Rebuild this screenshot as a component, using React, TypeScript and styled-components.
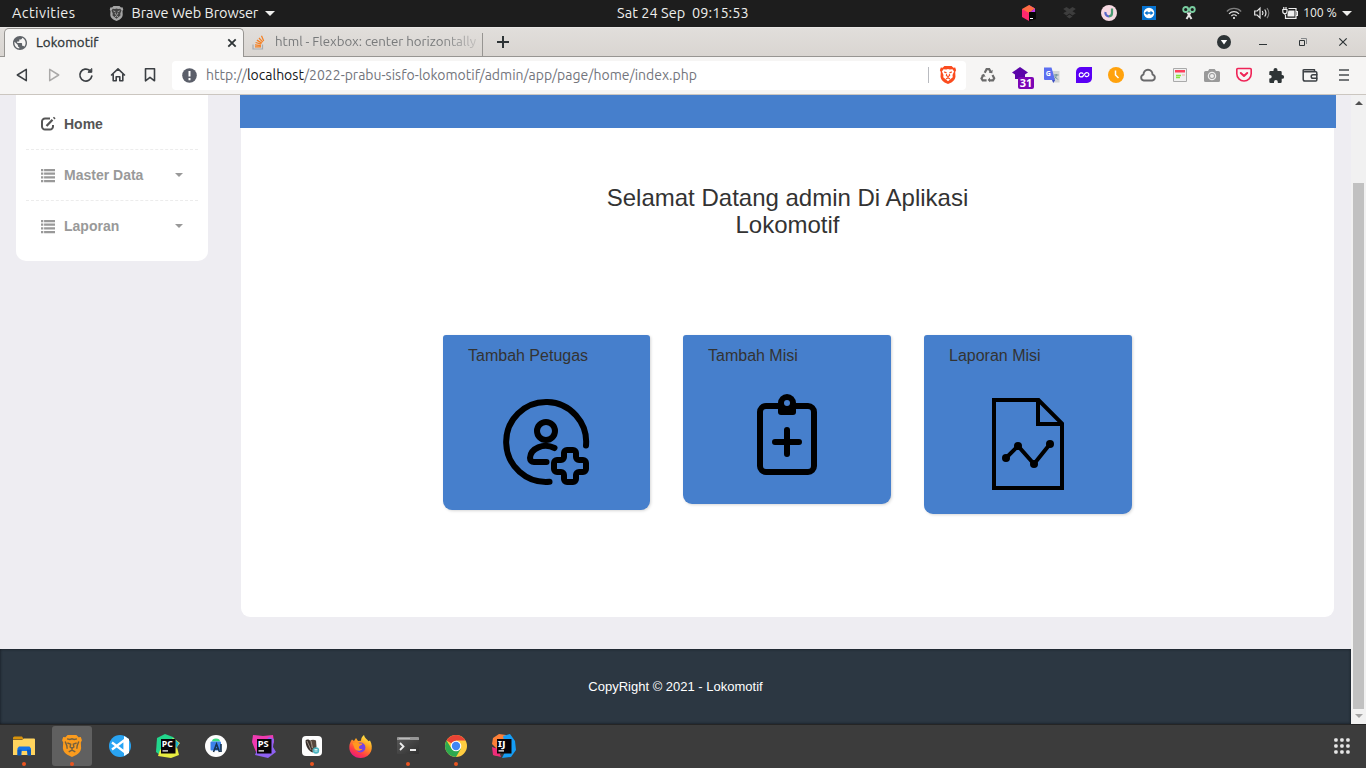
import React from "react";
import styled, { createGlobalStyle } from "styled-components";

const GlobalStyle = createGlobalStyle`
  * { box-sizing: border-box; }
  html, body { margin: 0; padding: 0; }
  body { width: 1366px; height: 768px; overflow: hidden; background: #eeedf2; }
  svg { display: block; flex: none; overflow: visible; }
`;

const uiFont = `Ubuntu, "Noto Sans", "Open Sans", sans-serif`;
const pageFont = `"Liberation Sans", Arial, sans-serif`;

const Desktop = styled.div`
  width: 1366px;
  height: 768px;
  display: flex;
  flex-direction: column;
  overflow: hidden;
`;

const Label = styled.span<{ $size?: number; $spacing?: number; $color?: string; $bolder?: boolean }>`
  font-family: ${uiFont};
  font-size: ${(p) => p.$size ?? 14}px;
  letter-spacing: ${(p) => p.$spacing ?? 0}px;
  color: ${(p) => p.$color ?? "inherit"};
  ${(p) => p.$bolder && "-webkit-text-stroke: 0.3px currentColor;"}
  white-space: pre;
  line-height: 20px;
`;

/* ---------- System bar ---------- */

const SystemBar = styled.header`
  flex: none;
  height: 27px;
  padding-bottom: 1px;
  background: #1d1d1d;
  color: #eeeeec;
  display: grid;
  grid-template-columns: 617px 392px 1fr;
  align-items: center;
`;

const SystemLeft = styled.div`
  display: flex;
  align-items: center;
  padding-left: 12px;
`;

const AppMenu = styled.div`
  display: flex;
  align-items: center;
  margin-left: 34px;
  gap: 7px;
`;

const Tray = styled.div`
  display: flex;
  align-items: center;
`;

const TrayCell = styled.div<{ $w?: number }>`
  width: ${(p) => p.$w ?? 40}px;
  display: flex;
  flex: none;
  justify-content: center;
`;

const StatusMenu = styled.div`
  display: flex;
  align-items: center;
  padding-left: 17px;
  gap: 12px;
`;

const BatteryStatus = styled.div`
  display: flex;
  align-items: center;
  gap: 5px;
`;

const Caret = styled.i<{ $w?: number; $color?: string; $up?: boolean }>`
  display: block;
  flex: none;
  width: 0;
  height: 0;
  border: ${(p) => p.$w ?? 5}px solid transparent;
  border-top: ${(p) => (p.$up ? "0" : `${p.$w ?? 5}px solid ${p.$color ?? "#eeeeec"}`)};
  border-bottom: ${(p) => (p.$up ? `${p.$w ?? 5}px solid ${p.$color ?? "#eeeeec"}` : "0")};
`;

/* ---------- Browser chrome ---------- */

const TabStrip = styled.div`
  flex: none;
  height: 30px;
  display: flex;
  background: linear-gradient(#e1dedb, #d9d5d1);
  border-top: 1px solid #e9e7e5;
  box-shadow: inset 0 -1px #979592;
`;

const ActiveTab = styled.div`
  width: 240px;
  height: 29px;
  margin-left: 4px;
  display: flex;
  align-items: center;
  padding: 0 7px 1px 8px;
  background: #f6f5f4;
  border: 1px solid #979592;
  border-bottom: 0;
  border-radius: 5px 5px 0 0;
`;

const IdleTab = styled.div`
  width: 239px;
  height: 23px;
  margin-top: 5px;
  display: flex;
  align-items: center;
  padding: 0 0 5px 8px;
  border-right: 1px solid #979592;
`;

const TabTitle = styled.div<{ $fade?: boolean }>`
  flex: 1;
  margin-left: 9px;
  display: flex;
  ${(p) => p.$fade && `margin-left: 10px; mask-image: linear-gradient(90deg, #000 165px, rgba(0, 0, 0, 0.25) 202px);`}
`;

const NewTab = styled.div`
  width: 40px;
  display: flex;
  align-items: center;
  justify-content: center;
  padding-bottom: 1px;
`;

const WindowControls = styled.div`
  margin-left: auto;
  display: flex;
  align-items: center;
  padding: 0 3px 1px 0;
`;

const Toolbar = styled.div`
  flex: none;
  height: 38px;
  padding: 0 6px;
  display: flex;
  align-items: center;
  background: #f6f5f4;
  border-bottom: 1px solid #cbc6c0;
`;

const ToolButton = styled.div<{ $w?: number }>`
  width: ${(p) => p.$w ?? 32}px;
  height: 29px;
  padding-bottom: 1px;
  display: flex;
  flex: none;
  align-items: center;
  justify-content: center;
  position: relative;
`;

const AddressBar = styled.div`
  width: 794px;
  height: 29px;
  margin: 0 6px;
  display: flex;
  align-items: center;
  padding: 0 0 1px 10px;
  background: #fff;
  border-radius: 4px;
  color: #73757c;
`;

const Url = styled.div`
  margin-left: 9px;
  padding-bottom: 1px;
  flex: 1;
  display: flex;
`;

const ShieldSlot = styled.div`
  width: 38px;
  height: 16px;
  display: flex;
  align-items: center;
  justify-content: center;
  border-left: 1px solid #b9bbc0;
`;

const Badge = styled.span`
  position: absolute;
  left: 14px;
  top: 16px;
  width: 16px;
  height: 12px;
  border-radius: 2px;
  background: #7c06b5;
  color: #fff;
  font: 700 11px/12px "Noto Sans", sans-serif;
  text-align: center;
`;

/* ---------- Web page ---------- */

const Viewport = styled.div`
  flex: 1;
  min-height: 0;
  display: flex;
  font-family: ${pageFont};
`;

const Page = styled.div`
  width: 1351px;
  display: flex;
  flex-direction: column;
  background: #eeedf2;
`;

const Columns = styled.div`
  height: 554px;
  display: flex;
  align-items: flex-start;
`;

const Sidebar = styled.nav`
  width: 192px;
  height: 166px;
  margin-left: 16px;
  padding: 4px 10px 0;
  background: #fff;
  border-radius: 0 0 10px 10px;
`;

const NavItem = styled.div<{ $active?: boolean }>`
  height: 51px;
  display: flex;
  align-items: center;
  padding: 0 15px;
  font-size: 14px;
  font-weight: 700;
  color: ${(p) => (p.$active ? "#555" : "#999")};
  border-bottom: 1px dashed #ececec;
  &:last-child { border-bottom-color: transparent; }
  span { margin-left: 9px; flex: 1; }
`;

const Main = styled.main`
  width: 1096px;
  margin-left: 32px;
`;

const Banner = styled.div`
  height: 33px;
  background: #467fcc;
`;

const Panel = styled.section`
  height: 489px;
  margin: 0 2px 0 1px;
  background: #fff;
  border-radius: 0 0 9px 9px;
  display: flex;
  flex-direction: column;
  align-items: center;
`;

const Welcome = styled.h1`
  width: 400px;
  margin: 56px 0 0;
  font-weight: 400;
  font-size: 24px;
  line-height: 27px;
  text-align: center;
  color: #333;
`;

const CardRow = styled.div`
  display: flex;
  align-items: flex-start;
  gap: 33px;
  margin-top: 97px;
`;

const Card = styled.article<{ $h: number; $w?: number }>`
  width: ${(p) => p.$w ?? 208}px;
  height: ${(p) => p.$h}px;
  background: #467fcc;
  border-radius: 3px 3px 9px 9px;
  box-shadow: 1px 1px 3px rgba(0, 0, 0, 0.16);
  display: flex;
  flex-direction: column;
`;

const CardTitle = styled.h2`
  margin: 11px 0 0 25px;
  font-size: 16px;
  font-weight: 400;
  line-height: 20px;
  color: #333;
`;

const CardIcon = styled.div<{ $top: number; $left: number }>`
  margin: ${(p) => p.$top}px 0 0 ${(p) => p.$left}px;
`;

const Footer = styled.footer`
  height: 75px;
  display: flex;
  align-items: center;
  justify-content: center;
  background: #2c3742;
  box-shadow: inset 0 0 3px #10161d;
  color: #fff;
  font-size: 13px;
`;

const Scrollbar = styled.div`
  width: 15px;
  display: flex;
  flex-direction: column;
  align-items: center;
  background: #f1f1f1;
  padding: 6px 0 5px;
`;

const Thumb = styled.div`
  width: 11px;
  height: 526px;
  margin-top: 78px;
  margin-bottom: 5px;
  background: #c1c1c1;
`;

/* ---------- Dock ---------- */

const DockBar = styled.footer`
  flex: none;
  height: 44px;
  display: flex;
  align-items: center;
  background: #3c3c3c;
  border-top: 1px solid #252525;
`;

const DockItem = styled.div<{ $active?: boolean; $running?: boolean }>`
  position: relative;
  width: 40px;
  height: 40px;
  margin: -1px 4px 0;
  display: flex;
  align-items: center;
  justify-content: center;
  border-radius: 3px;
  background: ${(p) => (p.$active ? "#606060" : "transparent")};
  &::after {
    content: "";
    display: ${(p) => (p.$running ? "block" : "none")};
    position: absolute;
    left: 18px;
    bottom: 0;
    width: 4px;
    height: 4px;
    border-radius: 2px;
    background: #e95420;
  }
`;

const AppsButton = styled.div`
  margin: -1px 0 0 auto;
  width: 48px;
  display: flex;
  justify-content: center;
`;

/* ---------- Drawings ---------- */

const Lion = ({ size = 16, fill = "#fb4c1f", face = "#fff", line = fill }) => (
  <svg width={size} height={size} viewBox="0 0 18 20">
    <path d="M5 0h8l2 2 2-.2 1 3-1 2 .3 5.2c-.4 3-2 4.500-4.500 6.200L9 20l-3.800-1.800C2.700 16.500 1.100 15 .7 12L1 6.800 0 4.800l1-3L3 2z" fill={fill} />
    <path d="M4 3.500 7 4l2-.8 2 .8 3-.5 1.700 2.500-1.700 4 .3 2.500L9 17l-5.300-4.500.3-2.500-1.700-4z" fill={face} />
    <path d="M4.800 6.500l2.700 1.200M13.200 6.500l-2.700 1.200M7.500 9l-.3 1.500L9 11.800l1.800-1.300-.3-1.500M6.800 14.500 9 13l2.200 1.500" fill="none" stroke={line} strokeWidth="1.300" />
  </svg>
);

const DockLion = () => (
  <svg width="20" height="22" viewBox="0 0 18 20">
    <path d="M5 0h8l2 2 2-.2 1 3-1 2 .3 5.200c-.4 3-2 4.500-4.500 6.200L9 20l-3.800-1.800C2.700 16.500 1.100 15 .7 12L1 6.800 0 4.800l1-3L3 2z" fill="#fb9b1d" />
    <path d="M4.500 3.500 7 4l2-.6 2 .6 2.500-.5M2.800 6l1.500 3.800.3 2.700M15.200 6l-1.500 3.800-.3 2.700M4.800 7.300l3 1-.5 2.500 1.700 1.400 1.700-1.400-.5-2.500 3-1M9 12.200v1.500M6 15.300l3-1.600 3 1.600" fill="none" stroke="#75613f" strokeWidth="1.300" />
  </svg>
);

const Globe = () => (
  <svg width="14" height="14" viewBox="2 2 20 20" fill="#5f6368">
    <path d="M12 2C6.480 2 2 6.480 2 12s4.480 10 10 10 10-4.480 10-10S17.520 2 12 2zm-1 17.930c-3.950-.49-7-3.850-7-7.930 0-.62.08-1.210.21-1.790L9 15v1c0 1.100.9 2 2 2v1.930zm6.900-2.540c-.26-.81-1-1.390-1.900-1.390h-1v-3c0-.55-.45-1-1-1H8v-2h2c.55 0 1-.45 1-1V7h2c1.100 0 2-.9 2-2v-.41c2.930 1.190 5 4.060 5 7.410 0 2.080-.8 3.970-2.100 5.390z" />
  </svg>
);

const StackOverflow = () => (
  <svg width="13" height="15" viewBox="0 0 13 15" fill="none">
    <path d="M1 9.500v4.500h9.500V9.500" stroke="#a7abb0" strokeWidth="1.200" />
    <path d="M3 11.900h6M3 9.800l5.900.8M3.600 7.500l5.600 1.700M4.900 5.100l4.900 3M7 3l3.800 4.200M9.500.8l2.200 5.300" stroke="#f48024" strokeWidth="1.250" />
  </svg>
);

const Cross = ({ size = 8, color = "#2e3436", w = 1.8 }) => (
  <svg width={size} height={size} viewBox="0 0 8 8" stroke={color} strokeWidth={w} fill="none">
    <path d="M.3.3l7.400 7.400M7.700.3.3 7.700" />
  </svg>
);

const Stroke = ({ children, color = "#3b3f43", w = 1.5, size = 16 }: { children: React.ReactNode; color?: string; w?: number; size?: number }) => (
  <svg width={size} height={size} viewBox="0 0 16 16" fill="none" stroke={color} strokeWidth={w} strokeLinecap="round" strokeLinejoin="round">
    {children}
  </svg>
);

const Recycle = () => (
  <svg width="16" height="16" viewBox="0 0 16 16" fill="none" stroke="#6b6b6b" strokeWidth="2.200">
    <path d="M4.700 5.800 6.600 2.200h2.600l1.600 2.900M12.500 8l1.700 3.200-1.200 2.200H9.500M6.600 13.400H2.700L1.500 11.500l1.700-3.200" />
    <path d="M8.700 5.800l3.600.5.400-3.600zM10 10.500v4.800L7.600 13zM1 8.200l3-1.500 1.600 3.200z" fill="#6b6b6b" stroke="none" />
  </svg>
);

const Translate = () => (
  <svg width="16" height="16" viewBox="0 0 16 16">
    <path d="M8 4h7.500v11.500H9z" fill="#d4d6d6" />
    <path d="M0 .5h7.500l3.600 12.500H1a1 1 0 0 1-1-1z" fill="#5c6ff0" />
    <path d="M8 13h3.200L9.200 16z" fill="#3d4fc4" />
    <text x="1.800" y="9" fontSize="7" fontWeight="700" fill="#fff" fontFamily="Noto Sans">G</text>
    <path d="M10 8h4.500M12.200 7v1c0 2-1 3.300-2 4M10.800 9.500l3 3" stroke="#6a8f99" fill="none" />
  </svg>
);

const DiagonalLoop = () => (
  <svg width="16" height="16" viewBox="0 0 16 16">
    <path d="M5 0h11v11a5 5 0 0 1-5 5H0V5a5 5 0 0 1 5-5z" fill="#5a00f5" />
    <path d="M7.200 6.800C5.800 5 3.200 5.800 3.200 7.900s2.500 2.800 3.900 1.100L9 6.600c1.400-1.700 3.900-1 3.900 1s-2.600 2.800-4 1.100" fill="none" stroke="#fff" strokeWidth="1.200" />
  </svg>
);

const Camera = () => (
  <svg width="16" height="14" viewBox="0 0 16 14">
    <path d="M1.500 3H4l1.300-2h5.400L12 3h2.500A1.500 1.500 0 0 1 16 4.500v8a1.500 1.500 0 0 1-1.500 1.500h-13A1.500 1.500 0 0 1 0 12.500v-8A1.500 1.500 0 0 1 1.500 3z" fill="#999" />
    <circle cx="8" cy="8" r="3.600" fill="#999" stroke="#eee" strokeWidth="1.300" />
    <circle cx="8" cy="8" r="2" fill="#eee" />
  </svg>
);

const Puzzle = () => (
  <svg width="15" height="15" viewBox="0 0 15 15" fill="#2e3436">
    <path d="M1.500 3h3V2a2 2 0 0 1 4 0v1h3A1.200 1.200 0 0 1 12.700 4.200V7h.5a1.900 1.900 0 0 1 0 3.800h-.5v2.900a1.200 1.200 0 0 1-1.200 1.200H8.800V14a1.900 1.900 0 0 0-3.800 0v.9H1.500A1.200 1.200 0 0 1 .3 13.700V10.500H1a1.700 1.700 0 0 0 0-3.400H.3V4.200A1.200 1.200 0 0 1 1.500 3z" />
  </svg>
);

const EditIcon = () => (
  <svg width="14" height="14" viewBox="0 0 14 14" fill="none" stroke="#555" strokeWidth="2">
    <path d="M9 1.500H4A3 3 0 0 0 1 4.500v5a3 3 0 0 0 3 3h5a3 3 0 0 0 3-3V8" />
    <path d="M5.500 9l6-6.200M12.700 1.600l1.100-1.100" strokeWidth="2.300" />
  </svg>
);

const ListIcon = () => (
  <svg width="14" height="13" viewBox="0 0 14 13" stroke="#999" strokeWidth="2.250">
    {[1, 4.7, 8.3, 12].map((y) => (
      <path key={y} d={`M0 ${y}h2.300M3.100 ${y}h10.900`} />
    ))}
  </svg>
);

const PersonAdd = () => (
  <svg width="86" height="86" viewBox="0 0 86 86" fill="none" stroke="#000" strokeWidth="6" strokeLinecap="round">
    <path d="M83 46.500A40 40 0 1 0 46.500 82.800" />
    <circle cx="43" cy="32" r="9" />
    <path d="M51.500 49C40.500 43.500 27.500 49.500 27 59c0 2.500 1.500 4 4 4h12.500" />
    <path d="M61 58v-4a3 3 0 0 1 3-3h6a3 3 0 0 1 3 3v4a3 3 0 0 0 3 3h4a3 3 0 0 1 3 3v6a3 3 0 0 1-3 3h-4a3 3 0 0 0-3 3v4a3 3 0 0 1-3 3h-6a3 3 0 0 1-3-3v-4a3 3 0 0 0-3-3h-4a3 3 0 0 1-3-3v-6a3 3 0 0 1 3-3h4a3 3 0 0 0 3-3z" />
  </svg>
);

const ClipboardAdd = () => (
  <svg width="60" height="81" viewBox="0 0 60 81" fill="none" stroke="#000" strokeWidth="6" strokeLinecap="round">
    <rect x="3" y="12" width="54" height="66" rx="6" />
    <path d="M30 36v24M18 48h24" />
    <path d="M30 0a9 9 0 0 1 9 9v9a3 3 0 0 1-3 3H24a3 3 0 0 1-3-3V9a9 9 0 0 1 9-9z" fill="#000" stroke="none" />
    <circle cx="30" cy="9" r="3" fill="#467fcc" stroke="none" />
  </svg>
);

const ReportChart = () => (
  <svg width="72" height="92" viewBox="0 0 72 92" fill="none" stroke="#000" strokeWidth="4">
    <path d="M2 2h44.500L70 25.500V90H2z" />
    <path d="M46 2v24h24" />
    <path d="M14 60l12-12 16 18 16-20" />
    <g fill="#000" stroke="none">
      <circle cx="14" cy="60" r="4" />
      <circle cx="26" cy="48" r="4" />
      <circle cx="42" cy="66" r="4" />
      <circle cx="58" cy="46" r="4" />
    </g>
  </svg>
);

type JbProps = { text: string; shapes: [string, string][] };
const JetBrains = ({ text, shapes }: JbProps) => (
  <svg width="24" height="24" viewBox="0 0 24 24">
    {shapes.map(([d, fill], i) => (
      <path key={i} d={d} fill={fill} />
    ))}
    <rect x="5" y="5" width="14.500" height="14.500" fill="#080408" />
    <text x="5.800" y="12.600" fontFamily="Noto Sans" fontWeight="700" fontSize="8.500" fill="#fff" textLength={text === "IJ" ? 8 : 11} lengthAdjust="spacingAndGlyphs">{text}</text>
    <rect x="6.500" y="16.300" width="5.500" height="1.200" fill="#fff" />
  </svg>
);

const Files = () => (
  <svg width="22" height="20" viewBox="0 0 22 20">
    <path d="M0 2A1.500 1.500 0 0 1 1.500.5H9l2 3H0z" fill="#d9930b" />
    <path d="M0 4h9l2-1.500h10a1 1 0 0 1 1 1V19H0z" fill="#ffd45e" />
    <path d="M4.500 19.300v-7L6 10.500h10.500l1.500 2v6.800h-3.500V15h-6v4.300z" fill="#1673e6" />
    <path d="M4.500 19.300v-5.500h4V15l-.8 4.300zM18 19.300v-5.500h-4V15l.8 4.300z" fill="#0b57b9" />
  </svg>
);

const VsCode = () => (
  <svg width="22" height="22" viewBox="0 0 22 22">
    <circle cx="11" cy="11" r="11" fill="#29a4f3" />
    <path d="M3 7.500 15.500 17V5L3 14.500" fill="none" stroke="#fff" strokeWidth="2.200" />
    <path d="M15 1l5 3v14l-5 3z" fill="#fff" />
  </svg>
);

const AndroidStudio = () => (
  <svg width="22" height="22" viewBox="0 0 22 22">
    <circle cx="11" cy="11" r="11" fill="#fdfdfd" />
    <path d="M7 6.500a4 3 0 0 1 8 0z" fill="#3ddc84" />
    <rect x="5.500" y="6.500" width="10.500" height="9" rx="1" fill="#3b82ea" />
    <path d="M8.500 17l3-8 3 8M9.500 14h4M16 9v8" stroke="#17324d" strokeWidth="1.600" fill="none" />
  </svg>
);

const DBeaver = () => (
  <svg width="20" height="20" viewBox="0 0 20 20">
    <rect width="20" height="20" rx="4" fill="#fdfdfd" />
    <path d="M3.500 4.500c1-1.500 4-1.500 5 1L11 16.500C6.500 15.500 3.500 10 3.500 4.500z" fill="#38302c" />
    <path d="M7.500 5c2-1.500 4.500-1.500 6.500-.5L14.500 11 11 16z" fill="#58483e" />
    <path d="M5 5l4 9M9 5l1.500 7" stroke="#d7cabc" strokeWidth=".6" />
    <circle cx="14" cy="14.500" r="3.200" fill="#4ab2be" />
    <path d="M12.500 13.500h3M12.500 15h3" stroke="#d7f0f2" />
  </svg>
);

const Firefox = () => (
  <svg width="23" height="23" viewBox="0 0 23 23">
    <defs>
      <linearGradient id="fox" x1=".8" y1="0" x2=".25" y2="1">
        <stop offset="0" stopColor="#fff44f" /><stop offset=".4" stopColor="#ff9a1f" /><stop offset=".75" stopColor="#ff3b47" /><stop offset="1" stopColor="#e31587" />
      </linearGradient>
    </defs>
    <path d="M3 4.500 5 6l2-3 2 3 3-.3C12 3 13.500 1 15 0c.5 3 3 4 4.500 6.300L21 5.500c2 3.500 2.400 7.700 1 11A11.200 11.200 0 0 1 11.500 23C5 23 0 18 .3 12 .3 9 1.500 6.500 3 4.500z" fill="url(#fox)" />
    <circle cx="11.500" cy="12.500" r="4.900" fill="#7542e5" />
    <path d="M3.500 8c3-1.500 5-.5 7 .5h3c-.5 2-3 1.800-3.500 3.200-.5 1.700 1.500 3 3.500 2-2 3.500-8 2.500-8.500-2z" fill="#ff9820" />
  </svg>
);

const Terminal = () => (
  <svg width="22" height="18" viewBox="0 0 22 18">
    <defs><linearGradient id="term" x2="1" y2="1"><stop stopColor="#5a5a5a" /><stop offset="1" stopColor="#303030" /></linearGradient></defs>
    <rect width="22" height="17" rx="1" fill="url(#term)" />
    <path d="M0 3V1a1 1 0 0 1 1-1h20a1 1 0 0 1 1 1v2z" fill="#969696" />
    <path d="M2 1.500h11" stroke="#bbb" />
    <path d="M3 6l3.500 3.500L3 13" stroke="#eee" strokeWidth="1.800" fill="none" />
    <path d="M13 13h6" stroke="#fff" strokeWidth="1.800" />
  </svg>
);

const Chrome = () => (
  <svg width="22" height="22" viewBox="0 0 22 22">
    <circle cx="11" cy="11" r="11" fill="#ffcd40" />
    <path d="M11 11 1.500 5.500A11 11 0 0 1 20.500 5.500H11z" fill="#ea4335" />
    <path d="M1.500 5.500A11 11 0 0 0 11 22l4.800-8.300L11 11 6.500 13.500z" fill="#2da94f" />
    <circle cx="11" cy="11" r="5.300" fill="#fff" />
    <circle cx="11" cy="11" r="4.200" fill="#4286f4" />
  </svg>
);

const AppsGrid = () => (
  <svg width="16" height="16" viewBox="0 0 16 16" fill="#e6e6e6">
    {[0.2, 6.2, 12.2].flatMap((y) => [0.2, 6.2, 12.2].map((x) => <rect key={`${x}-${y}`} x={x} y={y} width="3.500" height="3.500" rx="1.200" />))}
  </svg>
);

/* ---------- Sections ---------- */

const TopPanel = () => (
  <SystemBar>
    <SystemLeft>
      <Label $size={14.5} $spacing={0.4}>Activities</Label>
      <AppMenu>
        <Lion size={15} fill="#a5a5a5" face="#414141" />
        <Label $size={14.5} $spacing={-0.05}>Brave Web Browser</Label>
        <Caret />
      </AppMenu>
    </SystemLeft>
    <Label $size={14.5} $spacing={0.05}>Sat 24 Sep  09:15:53</Label>
    <Tray>
      <TrayCell>
        <svg width="16" height="16" viewBox="0 0 16 16">
          <path d="M8 0l6 3.500-6 4z" fill="#b733c9" /><path d="M8 0 1 4v7l7-3 6-4.500z" fill="#ff6b43" /><path d="M1 4l7 4v8l-7-4z" fill="#ff286d" /><path d="M14 3.500V12l-6 4V8z" fill="#c33aed" /><path d="M8 7h7v7l-7 2z" fill="#050505" /><path d="M9 13.500h3" stroke="#fff" />
        </svg>
      </TrayCell>
      <TrayCell>
        <svg width="13" height="12" viewBox="0 0 13 12" fill="#3d3d3d"><path d="M3.500 0l3 2-3 2.200L.2 2zM9.500 0l3.300 2-3.300 2.200-3-2.200zM3.500 4.200l3 2.200-3 2L.2 6.200zM9.500 4.200l3.300 2-3.300 2.200-3-2zM6.500 7.500l3 2-3 2-3-2zM6.500 2l3 2.200-3 2.200-3-2.200z" /></svg>
      </TrayCell>
      <TrayCell>
        <svg width="16" height="16" viewBox="0 0 16 16" fill="none" strokeWidth="2.200"><circle cx="8" cy="8" r="8" fill="#f6d9e2" /><path d="M11 3.500V8a3.200 3.200 0 0 1-3 3.300" stroke="#4b9a73" /><path d="M8 11.300A3.500 3.500 0 0 1 4.500 7" stroke="#5767c8" /></svg>
      </TrayCell>
      <TrayCell>
        <svg width="14" height="14" viewBox="0 0 14 14"><rect width="14" height="14" fill="#0874d1" /><circle cx="7" cy="7" r="5.300" fill="#fff" /><path d="M2.500 7l3-2.300v1.600h3V4.700l3 2.300-3 2.300V7.700h-3v1.600z" fill="#0874d1" /></svg>
      </TrayCell>
      <TrayCell>
        <svg width="14" height="14" viewBox="0 0 14 14" fill="none"><circle cx="3.700" cy="3.500" r="2.500" stroke="#79cda0" strokeWidth="1.800" /><circle cx="10.300" cy="3.500" r="2.500" stroke="#79cda0" strokeWidth="1.800" /><path d="M5.500 6.500l4 6.500M8.500 6.500l-4 6.500" stroke="#e5e5e5" strokeWidth="2" /></svg>
      </TrayCell>
      <StatusMenu>
        <svg width="16" height="12" viewBox="0 0 16 12" fill="none" stroke="#e2e2e2" strokeWidth="1.200"><path d="M.8 4.500a10 10 0 0 1 14.400 0" opacity=".5" /><path d="M3 6.800a7 7 0 0 1 10 0M5.400 9a3.700 3.700 0 0 1 5.200 0" /><circle cx="8" cy="11" r="1" fill="#fff" stroke="none" /></svg>
        <svg width="16" height="12" viewBox="0 0 16 12" fill="none" stroke="#e8e8e8" strokeWidth="1.200"><path d="M.7 4h2.500L6 1.200v9.600L3.200 8H.7zM8.300 4a3.400 3.400 0 0 1 0 4M10.700 2.500a6 6 0 0 1 0 7" /><path d="M13 1a8 8 0 0 1 0 10" opacity=".5" /></svg>
        <BatteryStatus>
          <svg width="16" height="13" viewBox="0 0 16 13" fill="none" stroke="#eee" strokeWidth="1.200"><path d="M6.500 1.500H14v9.800H3.500V8" /><path d="M14 4.500h1.400v4H14" /><path d="M.8 2.500h4.200v2a2.100 2.100 0 0 1-4.200 0zM1.800 0v2.500M4 0v2.500M3 6.500V8" /><path d="M6.500 3.500h6v6h-7V7z" fill="#eee" stroke="none" /></svg>
          <Label $size={12.3}>100 %</Label>
          <Caret />
        </BatteryStatus>
      </StatusMenu>
    </Tray>
  </SystemBar>
);

const BrowserTabs = () => (
  <TabStrip>
    <ActiveTab>
      <Globe />
      <TabTitle><Label $size={13.3} $color="#2e3436" $spacing={0.1} $bolder>Lokomotif</Label></TabTitle>
      <Cross />
    </ActiveTab>
    <IdleTab>
      <StackOverflow />
      <TabTitle $fade><Label $size={13.3} $spacing={-0.05} $color="#77797a">html - Flexbox: center horizontally</Label></TabTitle>
    </IdleTab>
    <NewTab>
      <svg width="12" height="12" viewBox="0 0 12 12" stroke="#2e3436" strokeWidth="2"><path d="M6 0v12M0 6h12" /></svg>
    </NewTab>
    <WindowControls>
      <TrayCell $w={38}>
        <svg width="14" height="14" viewBox="0 0 14 14"><circle cx="7" cy="7" r="7" fill="#2e3436" /><path d="M3.800 5h6.400L7 9.500z" fill="#fff" /></svg>
      </TrayCell>
      <TrayCell><svg width="8" height="8" viewBox="0 0 8 8"><path d="M0 6.500h8" stroke="#2e3436" /></svg></TrayCell>
      <TrayCell><svg width="8" height="8" viewBox="0 0 8 8" fill="none"><path d="M.5 2.500h5v5h-5z" stroke="#2e3436" /><path d="M2 .5h5.500V6" stroke="#85888a" /></svg></TrayCell>
      <TrayCell><Cross w={1.2} /></TrayCell>
    </WindowControls>
  </TabStrip>
);

const BrowserToolbar = () => (
  <Toolbar>
    <ToolButton><Stroke><path d="M12.300 2.300v11.400L3.300 8z" /></Stroke></ToolButton>
    <ToolButton><Stroke color="#aaa9a8"><path d="M3.700 2.300v11.400L12.700 8z" /></Stroke></ToolButton>
    <ToolButton><Stroke w={1.7}><path d="M13.800 9.200A6 6 0 1 1 11.800 3.500" /><path d="M10.300 5.300h3.500V1.900z" fill="#3b3f43" strokeWidth="1" /></Stroke></ToolButton>
    <ToolButton><Stroke w={1.6}><path d="M1.500 8 8 1.800 14.500 8M3.200 7.500v6.300h3V9.700h3.600v4.100h3V7.500" /></Stroke></ToolButton>
    <ToolButton><Stroke w={1.6}><path d="M3.500 1.800h9v12L8 10.300l-4.500 3.500z" /></Stroke></ToolButton>
    <AddressBar>
      <svg width="15" height="15" viewBox="0 0 15 15"><circle cx="7.500" cy="7.500" r="7.300" fill="#5b5f6a" /><path d="M7.500 3v5.500M7.500 10v2.200" stroke="#fff" strokeWidth="2" /></svg>
      <Url>
        <Label>http://</Label>
        <Label $color="#15171a">localhost</Label>
        <Label>/2022-prabu-sisfo-lokomotif/admin/app/page/home/index.php</Label>
      </Url>
      <ShieldSlot><Lion size={18} /></ShieldSlot>
    </AddressBar>
    <ToolButton><Recycle /></ToolButton>
    <ToolButton>
      <svg width="16" height="18" viewBox="0 0 16 18"><path d="M8 1l8 5.500-3 2V13H3V8.500l-3-2z" fill="#5b05a8" /></svg>
      <Badge>31</Badge>
    </ToolButton>
    <ToolButton><Translate /></ToolButton>
    <ToolButton><DiagonalLoop /></ToolButton>
    <ToolButton><svg width="16" height="16" viewBox="0 0 16 16"><circle cx="8" cy="8" r="8" fill="#ffa20d" /><path d="M7.500 3.500V8l3 3" fill="none" stroke="#fff" strokeWidth="1.500" /></svg></ToolButton>
    <ToolButton><Stroke color="#69696b" w={1.9}><path d="M3.800 13.500a3 3 0 0 1-.3-5.900C3.500 5 5.300 2.800 8 2.800S12.500 5 12.500 7.600a3 3 0 0 1-.3 5.900z" /></Stroke></ToolButton>
    <ToolButton><svg width="14" height="14" viewBox="0 0 14 14"><path d="M.5.500h13v13H.5z" fill="#f0f0f0" stroke="#aaa" /><path d="M2 2h10v2.500H2z" fill="#ff405c" /><path d="M3 7.500h5M3 9.500h4" stroke="#83e63a" strokeWidth="1.500" /><path d="M9 7h3" stroke="#f3a9a9" /></svg></ToolButton>
    <ToolButton><Camera /></ToolButton>
    <ToolButton><Stroke color="#ef2457" w={1.6}><path d="M1.800 1.500h12.400a1 1 0 0 1 1 1v4.300a7.200 7.200 0 0 1-14.400 0V2.500a1 1 0 0 1 1-1z" /><path d="M4.800 6 8 9l3.200-3" strokeWidth="2" /></Stroke></ToolButton>
    <ToolButton><Puzzle /></ToolButton>
    <ToolButton $w={36}><Stroke><path d="M2 2.800h10.500v2M1.200 3v9.300a1.800 1.800 0 0 0 1.800 1.800h10.800a1 1 0 0 0 1-1V5.800a1 1 0 0 0-1-1H2.500" /><path d="M14.800 7.700H11a1.800 1.800 0 0 0 0 3.600h3.800" /></Stroke></ToolButton>
    <ToolButton><svg width="10" height="12" viewBox="0 0 10 12" stroke="#4a4e50" strokeWidth="1.700"><path d="M0 1h10M0 6h10M0 11h10" /></svg></ToolButton>
  </Toolbar>
);

const WebPage = () => (
  <Viewport>
    <Page>
      <Columns>
        <Sidebar>
          <NavItem $active><EditIcon /><span>Home</span></NavItem>
          <NavItem><ListIcon /><span>Master Data</span><Caret $w={4} $color="#999" /></NavItem>
          <NavItem><ListIcon /><span>Laporan</span><Caret $w={4} $color="#999" /></NavItem>
        </Sidebar>
        <Main>
          <Banner />
          <Panel>
            <Welcome>Selamat Datang admin Di Aplikasi Lokomotif</Welcome>
            <CardRow>
              <Card $w={207} $h={175}>
                <CardTitle>Tambah Petugas</CardTitle>
                <CardIcon $top={33} $left={60}><PersonAdd /></CardIcon>
              </Card>
              <Card $h={169}>
                <CardTitle>Tambah Misi</CardTitle>
                <CardIcon $top={28} $left={74}><ClipboardAdd /></CardIcon>
              </Card>
              <Card $h={179}>
                <CardTitle>Laporan Misi</CardTitle>
                <CardIcon $top={32} $left={68}><ReportChart /></CardIcon>
              </Card>
            </CardRow>
          </Panel>
        </Main>
      </Columns>
      <Footer>CopyRight © 2021 - Lokomotif</Footer>
    </Page>
    <Scrollbar>
      <Caret $w={4} $up $color="#505050" />
      <Thumb />
      <Caret $w={4} $color="#a3a3a3" />
    </Scrollbar>
  </Viewport>
);

const Dock = () => (
  <DockBar>
    <DockItem $running><Files /></DockItem>
    <DockItem $active $running><DockLion /></DockItem>
    <DockItem><VsCode /></DockItem>
    <DockItem><JetBrains text="PC" shapes={[["M1 4 9 0l8 3 4 4-4 13-13 1L0 18z", "#22d68c"], ["M17 4l7 5-3 4 2 8-8 3-13-2 2-6z", "#e8ed42"], ["M19 6l4 3-3 6z", "#16b6d8"]]} /></DockItem>
    <DockItem><AndroidStudio /></DockItem>
    <DockItem><JetBrains text="PS" shapes={[["M1 1 11 2l10-1 1 7-6 12-12-2L0 8z", "#ef3bb0"], ["M17 3l5 2-1 8 3 5-8 6-13-3 2-5z", "#8f61f2"]]} /></DockItem>
    <DockItem $running><DBeaver /></DockItem>
    <DockItem><Firefox /></DockItem>
    <DockItem $running><Terminal /></DockItem>
    <DockItem $running><Chrome /></DockItem>
    <DockItem><JetBrains text="IJ" shapes={[["M1 4l6-4 7 1 1 7-8 14-6-1 3-7-4-4z", "#fc8038"], ["M11 2l7-2 5 7 1 9-5 7-9 1 4-8z", "#159df5"], ["M0 13l6 2 3 8-8-2z", "#ee2c79"]]} /></DockItem>
    <AppsButton><AppsGrid /></AppsButton>
  </DockBar>
);

export default function App() {
  return (
    <>
      <GlobalStyle />
      <Desktop>
        <TopPanel />
        <BrowserTabs />
        <BrowserToolbar />
        <WebPage />
        <Dock />
      </Desktop>
    </>
  );
}
